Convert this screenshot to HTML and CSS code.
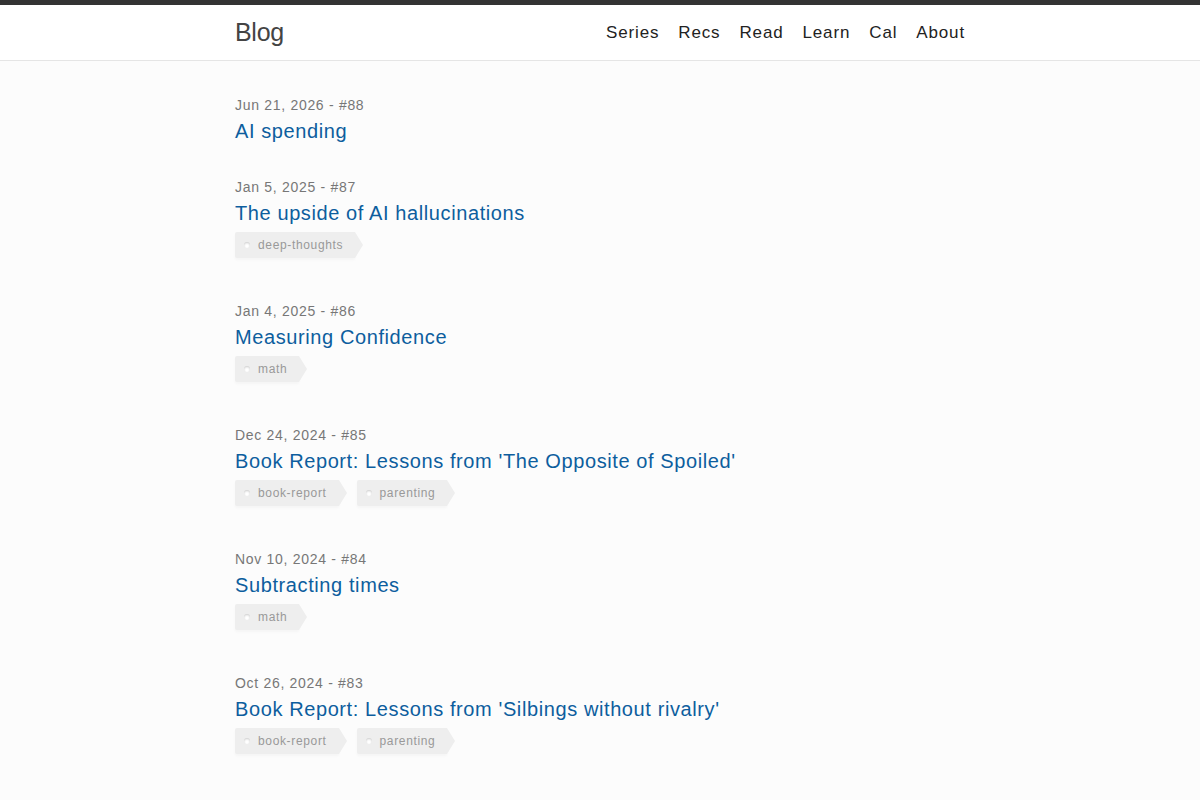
FILE: index.html
```html
<!DOCTYPE html>
<html>
<head>
<meta charset="utf-8">
<link rel="stylesheet" href="styles.css">
</head>
<body>
<header class="site-header">
  <div class="wrap header-inner">
    <a class="logo" href="#">Blog</a>
    <nav class="nav">
      <a href="#">Series</a>
      <a href="#">Recs</a>
      <a href="#">Read</a>
      <a href="#">Learn</a>
      <a href="#">Cal</a>
      <a href="#">About</a>
    </nav>
  </div>
</header>
<main class="wrap posts">
  <article class="post">
    <div class="meta">Jun 21, 2026 - #88</div>
    <a class="title" href="#">AI spending</a>
  </article>
  <article class="post">
    <div class="meta">Jan 5, 2025 - #87</div>
    <a class="title" href="#">The upside of AI hallucinations</a>
    <div class="tags"><span class="tag">deep-thoughts</span></div>
  </article>
  <article class="post">
    <div class="meta">Jan 4, 2025 - #86</div>
    <a class="title" href="#">Measuring Confidence</a>
    <div class="tags"><span class="tag">math</span></div>
  </article>
  <article class="post">
    <div class="meta">Dec 24, 2024 - #85</div>
    <a class="title" href="#">Book Report: Lessons from 'The Opposite of Spoiled'</a>
    <div class="tags"><span class="tag">book-report</span><span class="tag">parenting</span></div>
  </article>
  <article class="post">
    <div class="meta">Nov 10, 2024 - #84</div>
    <a class="title" href="#">Subtracting times</a>
    <div class="tags"><span class="tag">math</span></div>
  </article>
  <article class="post">
    <div class="meta">Oct 26, 2024 - #83</div>
    <a class="title" href="#">Book Report: Lessons from 'Silbings without rivalry'</a>
    <div class="tags"><span class="tag">book-report</span><span class="tag">parenting</span></div>
  </article>
</main>
</body>
</html>
```
FILE: styles.css
```css
html, body {
  margin: 0;
  padding: 0;
}
body {
  background: #fcfcfc;
  font-family: "Liberation Sans", Arial, sans-serif;
  color: #333;
}
a {
  text-decoration: none;
}
.wrap {
  width: 730px;
  margin: 0 auto;
}
.site-header {
  background: #fff;
  border-top: 5px solid #333;
  border-bottom: 1px solid #e5e5e5;
  height: 55px;
}
.header-inner {
  display: flex;
  justify-content: space-between;
  align-items: center;
  height: 55px;
}
.logo {
  font-size: 25px;
  color: #444;
  letter-spacing: -0.3px;
  line-height: 55px;
}
.nav {
  display: flex;
  gap: 19px;
}
.nav a {
  font-size: 17px;
  color: #222;
  letter-spacing: 0.85px;
  line-height: 53px;
}
.posts {
  padding-top: 34px;
}
.post {
  margin-bottom: 33px;
}
.meta {
  font-size: 14px;
  line-height: 20px;
  color: #777;
  letter-spacing: 0.7px;
}
.title {
  display: block;
  margin-top: 3px;
  font-size: 20px;
  line-height: 26px;
  color: #0d5e9e;
  letter-spacing: 0.6px;
}
.tags {
  display: flex;
  gap: 10px;
  margin-top: 6px;
  padding-bottom: 10px;
}
.tag {
  position: relative;
  display: inline-block;
  height: 26px;
  line-height: 26px;
  padding: 0 12px 0 23px;
  margin-right: 8px;
  background: #eee;
  color: #999;
  font-size: 12px;
  letter-spacing: 0.65px;
  border-radius: 2px 0 0 2px;
  box-shadow: 0 2px 3px rgba(0, 0, 0, 0.03);
}
.tag::before {
  content: "";
  position: absolute;
  left: 9px;
  top: 10px;
  width: 6px;
  height: 6px;
  border-radius: 50%;
  background: #fff;
  box-shadow: inset 0 1px 2px rgba(0, 0, 0, 0.2);
}
.tag::after {
  content: "";
  position: absolute;
  right: -8px;
  top: 0;
  border-top: 13px solid transparent;
  border-bottom: 13px solid transparent;
  border-left: 8px solid #eee;
}
```
